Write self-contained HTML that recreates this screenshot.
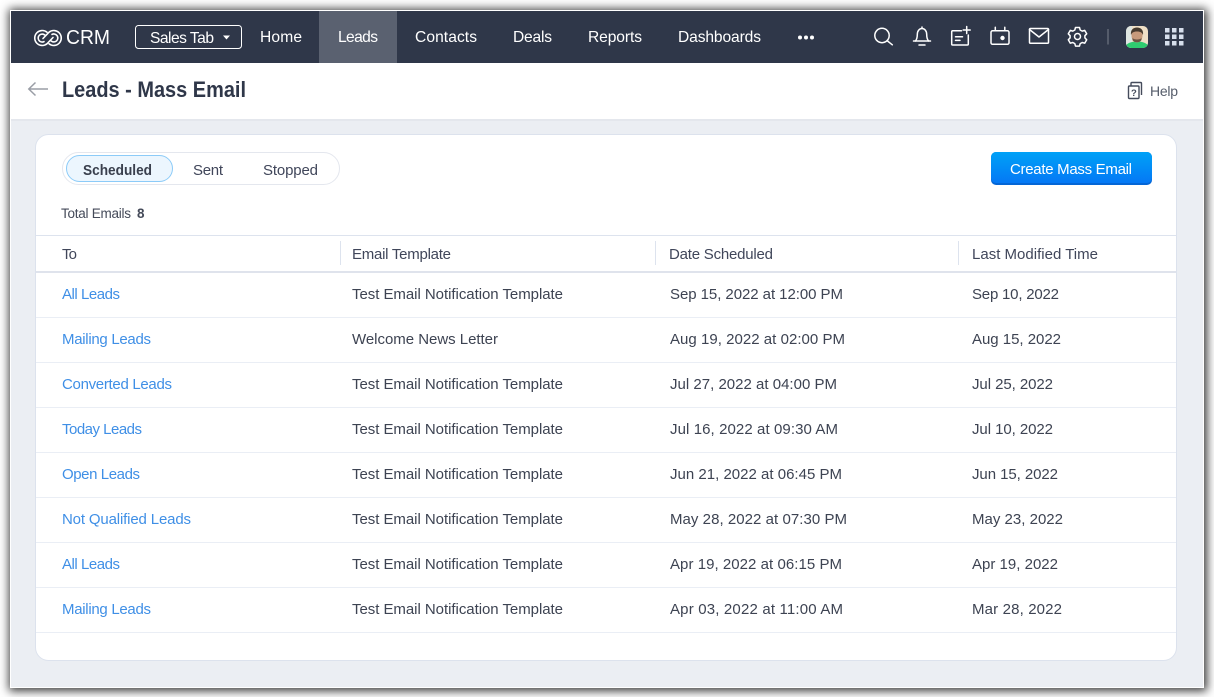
<!DOCTYPE html>
<html lang="en"><head><meta charset="utf-8"><title>Leads - Mass Email</title>
<style>
html,body{margin:0;padding:0;width:1214px;height:697px;overflow:hidden;background:#fff}
#win{position:absolute;left:11px;top:11px;width:1192px;height:676px;background:#ebeef3;box-shadow:0 0 0 1px #fff,1px 1px 9px 3px rgba(0,0,0,.78)}
svg{position:absolute;left:0;top:0}
text{font-family:"Liberation Sans",sans-serif;font-size:15px;fill:#3d4352}
.n{fill:#fff;font-size:15.6px}
.l{fill:#3f8fe6}
.h{fill:#40465a}
</style></head><body>
<div id="win"></div>
<svg width="1214" height="697" viewBox="0 0 1214 697" xmlns="http://www.w3.org/2000/svg">
<defs><linearGradient id="b" x1="0" y1="0" x2="0" y2="1"><stop offset="0" stop-color="#00a2f7"/><stop offset="1" stop-color="#0478f5"/></linearGradient></defs>
<rect x="11" y="11" width="1192" height="52" fill="#2f3749"/>
<rect x="319" y="11" width="78" height="52" fill="#5a6170"/>
<rect x="11" y="63" width="1192" height="56" fill="#fff"/>
<rect x="11" y="119" width="1192" height="2" fill="#e4e7ed"/>

<g fill="none" stroke="#fff" stroke-width="1.6" stroke-linecap="round">
<path d="M47 32.200 A7.500 7.500 0 1 0 47 43.800 L53 37.500"/>
<path d="M49 43.800 A7.500 7.500 0 1 0 49 32.200 L43 38.500"/>
<path d="M44 41.600 A4 4 0 1 1 44.800 35"/>
<path d="M52 34.400 A4 4 0 1 1 51.200 41"/>
</g>
<text class="n" x="66" y="44" style="font-size:20px" textLength="44" lengthAdjust="spacingAndGlyphs">CRM</text>
<rect x="135.500" y="25.500" width="106" height="23" rx="3" fill="none" stroke="#fff" stroke-width="1"/>
<text class="n" x="150" y="43" textLength="64">Sales Tab</text>
<path d="M223 35.500h7l-3.500 4z" fill="#fff"/>
<text class="n" x="260" y="42" textLength="42">Home</text>
<text class="n" x="338" y="42" textLength="40">Leads</text>
<text class="n" x="415" y="42" textLength="62">Contacts</text>
<text class="n" x="513" y="42" textLength="39">Deals</text>
<text class="n" x="588" y="42" textLength="54">Reports</text>
<text class="n" x="678" y="42" textLength="83">Dashboards</text>
<g fill="#fff"><circle cx="800" cy="37.500" r="2"/><circle cx="806" cy="37.500" r="2"/><circle cx="812" cy="37.500" r="2"/></g>

<g fill="none" stroke="#fff" stroke-width="1.500" stroke-linecap="round" stroke-linejoin="round">
<circle cx="882" cy="35.500" r="7.200"/><path d="M887.500 41 L892.300 44.800"/>
<path d="M922 27v1.500M915.500 41 C917 39 917.300 37 917.300 34.500 C917.300 31 919.300 28.500 922 28.500 C924.700 28.500 926.700 31 926.700 34.500 C926.700 37 927 39 928.500 41"/>
<path d="M913.500 41h17M919 45h6"/>
<path d="M961.500 30.800h-8.800a1 1 0 0 0-1 1v12.200a1 1 0 0 0 1 1h14.600a1 1 0 0 0 1-1v-9"/>
<path d="M955.500 36.800h7M955.500 40.400h4.500"/><path d="M966.700 26.500v7M963.200 30h7"/>
<rect x="991" y="30.800" width="18" height="13.500" rx="1.500"/><path d="M995.300 27.300v3.500M1004.800 27.300v3.500"/>
<rect x="1029.500" y="28.500" width="19" height="14.800" rx="1"/><path d="M1029.500 29.500 L1039 37 L1048.500 29.500"/>
</g>
<circle cx="1002.500" cy="38" r="2.200" fill="#fff"/>
<g fill="none" stroke="#fff" stroke-width="1.500" stroke-linejoin="round">
<path d="M1075.500 27.500h4l.7 2.500 2 1.100 2.500-.7 2 3.400-1.800 1.900v2.200l1.800 1.900-2 3.400-2.500-.7-2 1.100-.7 2.500h-4l-.7-2.500-2-1.100-2.500.7-2-3.400 1.800-1.900v-2.200l-1.800-1.900 2-3.400 2.500.7 2-1.100z"/>
<circle cx="1077.500" cy="36.500" r="3"/>
</g>
<rect x="1107" y="29" width="2" height="15.500" fill="#555c6b"/>
<clipPath id="av"><rect x="1126" y="26" width="22" height="22" rx="5"/></clipPath>
<g clip-path="url(#av)">
<rect x="1126" y="26" width="22" height="22" fill="#efdfc6"/>
<rect x="1126" y="26" width="6" height="22" fill="#dfe6e2"/>
<path d="M1126 48v-3c3-2.500 6-3.500 11-3.500s8 1 11 3.500v3z" fill="#2fcc70"/>
<ellipse cx="1137" cy="35.500" rx="5.500" ry="7" fill="#c79a7b"/>
<path d="M1131 35c-.8-5 2.300-7.500 6-7.500s6.800 2.500 6 7.500c-1-2.500-2.500-3.500-6-3.500s-5 1-6 3.500z" fill="#463a2e"/>
<path d="M1132.500 38c1.500 2 7.500 2 9 0v2c-1.500 3-7.500 3-9 0z" fill="#6b5443"/>
</g>
<g fill="#d7dfec">
<rect x="1165" y="28" width="4.500" height="4.500"/><rect x="1172" y="28" width="4.500" height="4.500"/><rect x="1179" y="28" width="4.500" height="4.500"/>
<rect x="1165" y="34.500" width="4.500" height="4.500"/><rect x="1172" y="34.500" width="4.500" height="4.500"/><rect x="1179" y="34.500" width="4.500" height="4.500"/>
<rect x="1165" y="41" width="4.500" height="4.500"/><rect x="1172" y="41" width="4.500" height="4.500"/><rect x="1179" y="41" width="4.500" height="4.500"/>
</g>

<path d="M29 89h19M35.500 82.500 L28.800 89 L35.500 95.500" fill="none" stroke="#9a9ea6" stroke-width="1.500"/>
<text x="62" y="97" style="font-size:22px;font-weight:700;fill:#2f3749" textLength="184" lengthAdjust="spacingAndGlyphs">Leads - Mass Email</text>
<g fill="none" stroke="#454c5c" stroke-width="1.400" stroke-linejoin="round">
<rect x="1128.500" y="86" width="10.500" height="12.500" rx="1"/>
<path d="M1131 85.500v-2a1 1 0 0 1 1-1h8.500a1 1 0 0 1 1 1v11.500"/>
</g>
<text x="1131" y="96" style="font-size:9.500px;font-weight:700;fill:#454c5c">?</text>
<text x="1150" y="96" style="font-size:14px;fill:#555c6a" textLength="28">Help</text>

<rect x="35.500" y="134.500" width="1141" height="526" rx="13" fill="#fff" stroke="#dce2ed" stroke-width="1"/>
<rect x="62.500" y="152.500" width="277" height="32" rx="16" fill="#fff" stroke="#e4e7ee"/>
<rect x="66.500" y="155.500" width="106" height="26" rx="13" fill="#ecf6fe" stroke="#8ccbf8"/>
<text x="83" y="175" style="font-weight:700;font-size:15px;fill:#3a404e" textLength="69" lengthAdjust="spacingAndGlyphs">Scheduled</text>
<text x="193" y="175" class="h" textLength="30">Sent</text>
<text x="263" y="175" class="h" textLength="55">Stopped</text>
<text x="61" y="218" style="font-size:13.500px;fill:#444a59" textLength="70">Total Emails</text>
<text x="137" y="218" style="font-size:13.500px;font-weight:700;fill:#444a59" textLength="8">8</text>
<rect x="991" y="152" width="161" height="33" rx="5" fill="#0466d6"/>
<rect x="991" y="152" width="161" height="31" rx="5" fill="url(#b)"/>
<text x="1010" y="174" style="fill:#fff;font-size:15px" textLength="122">Create Mass Email</text>

<rect x="36" y="235" width="1140" height="1" fill="#dde3ee"/>
<rect x="36" y="271" width="1140" height="2" fill="#dfe3ec"/>
<rect x="340" y="241" width="1" height="24" fill="#dde3ee"/><rect x="655" y="241" width="1" height="24" fill="#dde3ee"/><rect x="958" y="241" width="1" height="24" fill="#dde3ee"/>
<g class="h">
<text class="h" x="62" y="259" textLength="15">To</text>
<text class="h" x="352" y="259" textLength="99">Email Template</text>
<text class="h" x="669" y="259" textLength="104">Date Scheduled</text>
<text class="h" x="972" y="259" textLength="126">Last Modified Time</text>
</g>
<g fill="#eaeef5">
<rect x="36" y="317" width="1140" height="1"/><rect x="36" y="362" width="1140" height="1"/><rect x="36" y="407" width="1140" height="1"/><rect x="36" y="452" width="1140" height="1"/><rect x="36" y="497" width="1140" height="1"/><rect x="36" y="542" width="1140" height="1"/><rect x="36" y="587" width="1140" height="1"/><rect x="36" y="632" width="1140" height="1"/>
</g>

<text class="l" x="62" y="299" textLength="58">All Leads</text>
<text x="352" y="299" textLength="211">Test Email Notification Template</text>
<text x="670" y="299" textLength="173">Sep 15, 2022 at 12:00 PM</text>
<text x="972" y="299" textLength="87">Sep 10, 2022</text>

<text class="l" x="62" y="344" textLength="89">Mailing Leads</text>
<text x="352" y="344" textLength="146">Welcome News Letter</text>
<text x="670" y="344" textLength="175">Aug 19, 2022 at 02:00 PM</text>
<text x="972" y="344" textLength="89">Aug 15, 2022</text>

<text class="l" x="62" y="389" textLength="110">Converted Leads</text>
<text x="352" y="389" textLength="211">Test Email Notification Template</text>
<text x="670" y="389" textLength="167">Jul 27, 2022 at 04:00 PM</text>
<text x="972" y="389" textLength="81">Jul 25, 2022</text>

<text class="l" x="62" y="434" textLength="80">Today Leads</text>
<text x="352" y="434" textLength="211">Test Email Notification Template</text>
<text x="670" y="434" textLength="168">Jul 16, 2022 at 09:30 AM</text>
<text x="972" y="434" textLength="81">Jul 10, 2022</text>

<text class="l" x="62" y="479" textLength="78">Open Leads</text>
<text x="352" y="479" textLength="211">Test Email Notification Template</text>
<text x="670" y="479" textLength="172">Jun 21, 2022 at 06:45 PM</text>
<text x="972" y="479" textLength="86">Jun 15, 2022</text>

<text class="l" x="62" y="524" textLength="129">Not Qualified Leads</text>
<text x="352" y="524" textLength="211">Test Email Notification Template</text>
<text x="670" y="524" textLength="177">May 28, 2022 at 07:30 PM</text>
<text x="972" y="524" textLength="91">May 23, 2022</text>

<text class="l" x="62" y="569" textLength="58">All Leads</text>
<text x="352" y="569" textLength="211">Test Email Notification Template</text>
<text x="670" y="569" textLength="172">Apr 19, 2022 at 06:15 PM</text>
<text x="972" y="569" textLength="86">Apr 19, 2022</text>

<text class="l" x="62" y="614" textLength="89">Mailing Leads</text>
<text x="352" y="614" textLength="211">Test Email Notification Template</text>
<text x="670" y="614" textLength="173">Apr 03, 2022 at 11:00 AM</text>
<text x="972" y="614" textLength="90">Mar 28, 2022</text>
</svg>
</body></html>
